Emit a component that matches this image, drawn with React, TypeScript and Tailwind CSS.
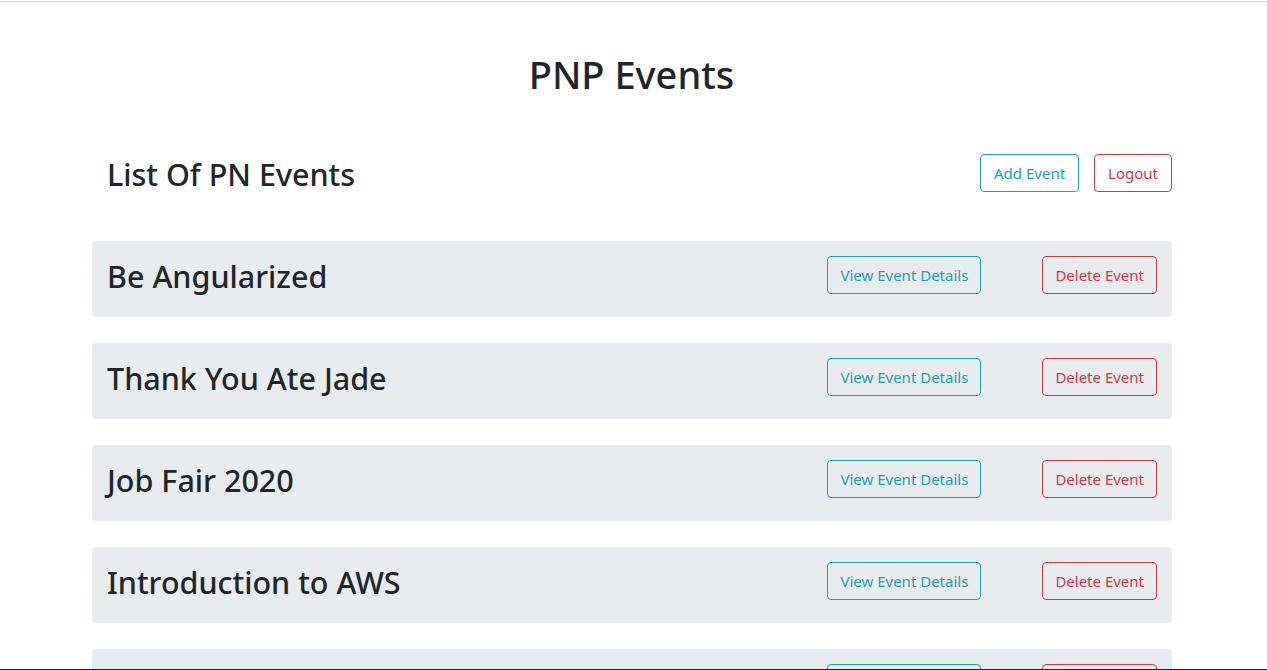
import React from 'react';

const events = [
  'Be Angularized',
  'Thank You Ate Jade',
  'Job Fair 2020',
  'Introduction to AWS',
  'Tech Talk Night',
];

const outlineInfo =
  'rounded-[4px] border border-[#17a2b8] px-3 h-[38px] text-[15px] text-[#17a2b8] leading-none bg-transparent';
const outlineDanger =
  'rounded-[4px] border border-[#dc3545] px-3 h-[38px] text-[15px] text-[#dc3545] leading-none bg-transparent';

export default function App() {
  return (
    <div
      className="relative h-[670px] overflow-hidden bg-white text-[#212529]"
      style={{ fontFamily: '"Noto Sans", "Open Sans", sans-serif' }}
    >
      {/* top rule */}
      <div className="h-px mt-px bg-[#dcdcdc]" />

      <h1 className="mt-[49px] text-center text-[38px] font-medium leading-[46px] -translate-x-[2px]">
        PNP Events
      </h1>

      <div className="ml-[92px] w-[1080px]">
        {/* header row */}
        <div className="mt-[57px] flex items-center justify-between pl-[15px]">
          <h2 className="text-[30.5px] font-medium leading-[38px] translate-y-[1px]">List Of PN Events</h2>
          <div className="flex gap-[15px]">
            <button className={`${outlineInfo} px-[13px]`}>Add Event</button>
            <button className={`${outlineDanger} px-[13px]`}>Logout</button>
          </div>
        </div>

        {/* events */}
        <div className="mt-[49px] flex flex-col gap-[26px]">
          {events.map((name) => (
            <div
              key={name}
              className="flex h-[76px] items-start justify-between rounded-[4px] bg-[#e9ecef] px-[15px]"
            >
              <h3 className="mt-[16px] text-[30.5px] font-medium leading-[38px]">{name}</h3>
              <div className="mt-[15px] flex gap-[61px]">
                <button className={outlineInfo}>View Event Details</button>
                <button className={outlineDanger}>Delete Event</button>
              </div>
            </div>
          ))}
        </div>
      </div>

      {/* bottom edge */}
      <div className="absolute bottom-0 left-0 right-0 h-px bg-[#1f2326]" />
    </div>
  );
}
